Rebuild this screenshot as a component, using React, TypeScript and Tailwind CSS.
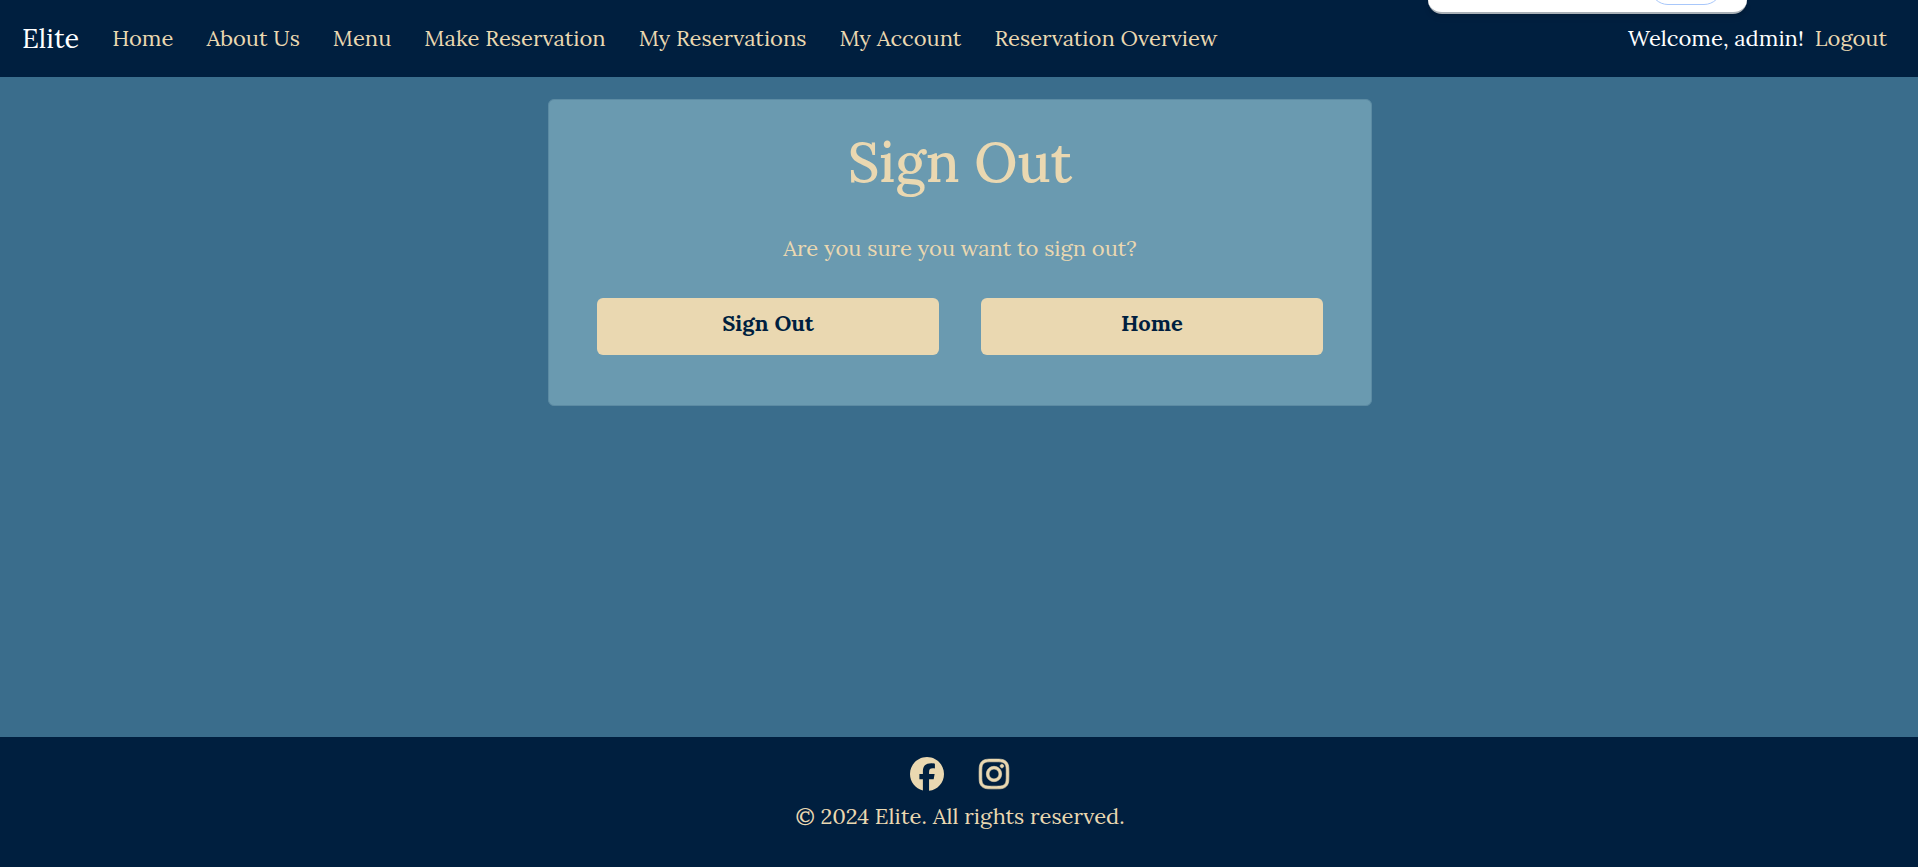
import { FaFacebook, FaInstagram } from "react-icons/fa6";

const links = [
  "Home",
  "About Us",
  "Menu",
  "Make Reservation",
  "My Reservations",
  "My Account",
  "Reservation Overview",
];

function Header() {
  return (
    <header className="flex min-h-[77px] items-center justify-between bg-[#001f3f] pr-[31px] pb-0.5 pl-[22px]">
      <nav className="flex items-center gap-[33px]">
        <a href="#" className="text-[27px] leading-9 text-white">
          Elite
        </a>
        {links.map((label) => (
          <a key={label} href="#" className="text-[#ead8b1]">
            {label}
          </a>
        ))}
      </nav>
      <div className="flex items-center gap-[11px]">
        <span className="text-white">Welcome, admin!</span>
        <a href="#" className="text-[#ead8b1]">
          Logout
        </a>
      </div>
    </header>
  );
}

function BrowserPopup() {
  return (
    <div className="absolute top-0 right-[171px] flex h-[14px] w-[319px] justify-end overflow-hidden rounded-b-2xl border-b-2 border-[#a9b0b6] bg-white pr-[25px] shadow-md">
      <div className="h-[5px] w-[72px] overflow-hidden">
        <div className="-mt-[31px] h-9 rounded-full border border-[#a8c7fa]" />
      </div>
    </div>
  );
}

function SignOutCard() {
  return (
    <section className="mx-auto mt-[22px] w-[43%] min-w-[560px] rounded-md border border-[#5c8ba3] bg-[#6a9ab0] px-12 pt-[26px] pb-[50px] text-center text-[#ead8b1]">
      <h1 className="text-[55px] leading-[72px] font-medium">Sign Out</h1>
      <p className="mt-[33px]">Are you sure you want to sign out?</p>
      <div className="mt-[33px] grid grid-cols-2 gap-[42px] font-bold text-[#001f3f]">
        <button type="button" className="rounded-md bg-[#ead8b1] pt-2 pb-[15px]">
          Sign Out
        </button>
        <a href="#" className="rounded-md bg-[#ead8b1] pt-2 pb-[15px]">
          Home
        </a>
      </div>
    </section>
  );
}

function Footer() {
  return (
    <footer className="flex min-h-[130px] flex-col items-center bg-[#001f3f] pt-5 pl-0.5 text-[#ead8b1]">
      <div className="flex items-center gap-[33px] text-[34px]">
        <a href="#" aria-label="Facebook">
          <FaFacebook />
        </a>
        <a href="#" aria-label="Instagram">
          <FaInstagram className="[stroke-width:10px]" />
        </a>
      </div>
      <p className="mt-2">© 2024 Elite. All rights reserved.</p>
    </footer>
  );
}

export default function App() {
  return (
    <div className="relative flex min-h-screen flex-col bg-[#3a6d8c] font-[Lora,'Liberation_Serif',serif] text-[22px] leading-[34px]">
      <Header />
      <BrowserPopup />
      <main className="flex-1 pl-0.5">
        <SignOutCard />
      </main>
      <Footer />
    </div>
  );
}
